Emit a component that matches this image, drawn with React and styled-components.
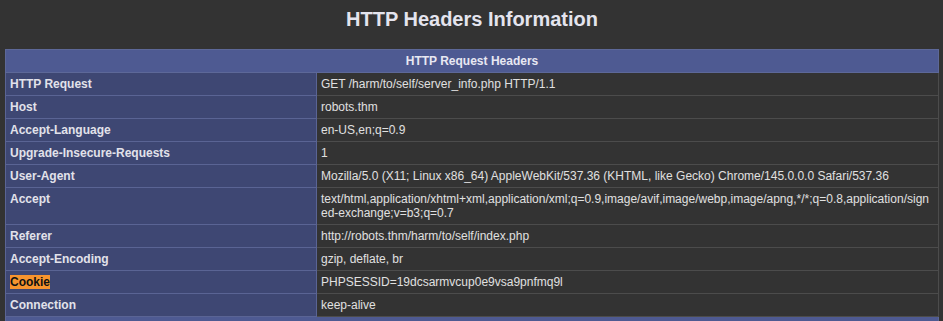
import React from "react";
import styled, { createGlobalStyle } from "styled-components";

const GlobalStyle = createGlobalStyle`
  html, body {
    margin: 0;
    padding: 0;
    background: #333333;
  }
  body {
    font-family: "Liberation Sans", Arial, sans-serif;
    font-size: 12px;
    color: #e0e0e0;
  }
`;

const requestHeaders = [
  ["HTTP Request", "GET /harm/to/self/server_info.php HTTP/1.1"],
  ["Host", "robots.thm"],
  ["Accept-Language", "en-US,en;q=0.9"],
  ["Upgrade-Insecure-Requests", "1"],
  [
    "User-Agent",
    "Mozilla/5.0 (X11; Linux x86_64) AppleWebKit/537.36 (KHTML, like Gecko) Chrome/145.0.0.0 Safari/537.36",
  ],
  [
    "Accept",
    "text/html,application/xhtml+xml,application/xml;q=0.9,image/avif,image/webp,image/apng,*/*;q=0.8,application/signed-exchange;v=b3;q=0.7",
  ],
  ["Referer", "http://robots.thm/harm/to/self/index.php"],
  ["Accept-Encoding", "gzip, deflate, br"],
  ["Cookie", "PHPSESSID=19dcsarmvcup0e9vsa9pnfmq9l", true],
  ["Connection", "keep-alive"],
];

const Page = styled.div`
  padding: 8px 4px 0 5px;
`;

const Title = styled.h1`
  margin: 0 0 18px;
  text-align: center;
  font-size: 20px;
  line-height: 23px;
  font-weight: bold;
  color: #e4e4ee;
`;

const Table = styled.table`
  width: 100%;
  border-collapse: collapse;
  table-layout: fixed;
`;

const LabelCol = styled.col`
  width: 33.33%;
`;

const SectionHead = styled.th`
  background: #4e5a92;
  border: 1px solid #5d6898;
  padding: 4px;
  font-weight: bold;
  text-align: center;
  color: #e8e8f2;
`;

const Label = styled.td`
  background: #3e4773;
  border: 1px solid #5a6494;
  padding: 4px;
  font-weight: bold;
  color: #e2e2ea;
  vertical-align: top;
`;

const Value = styled.td`
  border: 1px solid #4c4c4c;
  padding: 4px;
  color: #e0e0e0;
  word-break: break-all;
  vertical-align: top;
`;

const Mark = styled.span`
  background: #f7942e;
  color: #111;
`;

export default function App() {
  return (
    <Page>
      <GlobalStyle />
      <Title>HTTP Headers Information</Title>
      <Table>
        <colgroup>
          <LabelCol />
          <col />
        </colgroup>
        <tbody>
          <tr>
            <SectionHead colSpan={2}>HTTP Request Headers</SectionHead>
          </tr>
          {requestHeaders.map(([name, value, flagged]) => (
            <tr key={name}>
              <Label>{flagged ? <Mark>{name}</Mark> : name}</Label>
              <Value>{value}</Value>
            </tr>
          ))}
          <tr>
            <SectionHead colSpan={2}>Server Information</SectionHead>
          </tr>
        </tbody>
      </Table>
    </Page>
  );
}
